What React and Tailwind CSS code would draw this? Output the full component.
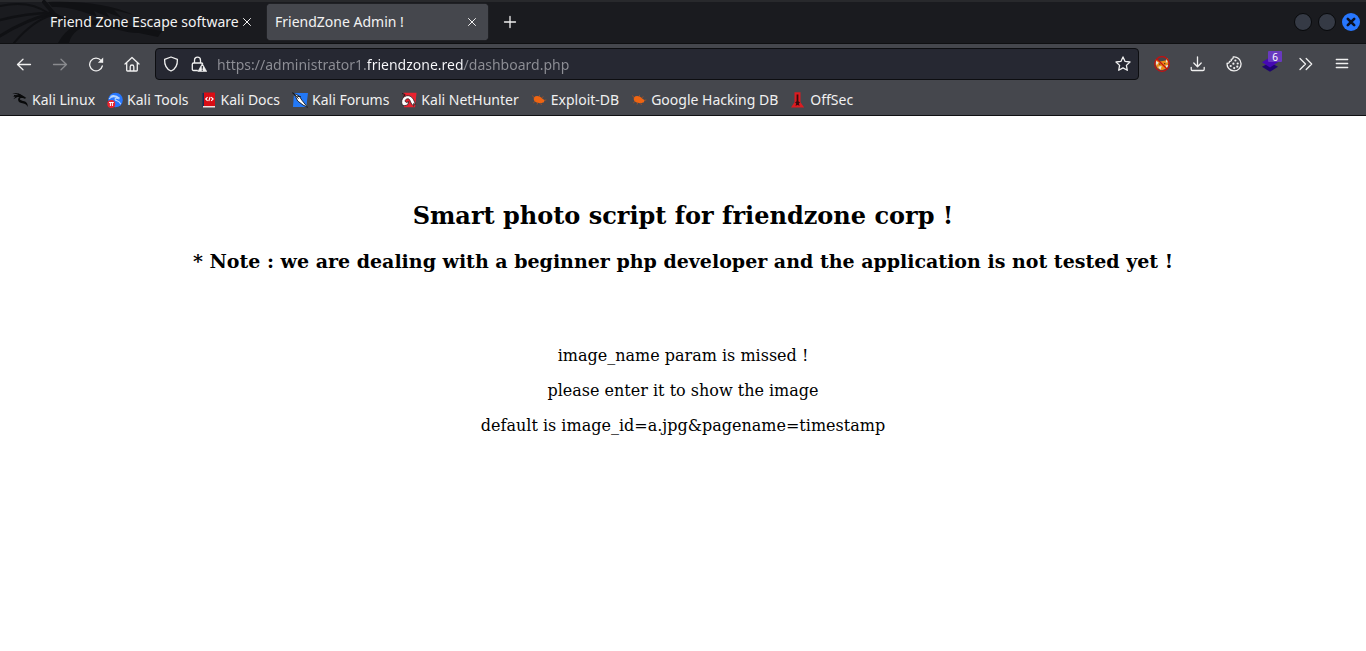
const stroke = {
  fill: 'none',
  stroke: 'currentColor',
  strokeWidth: 1.3,
  strokeLinecap: 'round',
  strokeLinejoin: 'round',
};

function Icon({ children, className = 'size-4' }) {
  return (
    <svg viewBox="0 0 16 16" className={`shrink-0 ${className}`} aria-hidden="true">
      {children}
    </svg>
  );
}

function ToolButton({ label, disabled, children }) {
  return (
    <button
      type="button"
      aria-label={label}
      disabled={disabled}
      className="relative flex h-9 w-9 shrink-0 items-center justify-center rounded text-[#f0f0f0] hover:bg-white/10 disabled:text-[#8a8b8f]"
    >
      {children}
    </button>
  );
}

const CloseGlyph = () => (
  <Icon>
    <path d="M4.5 4.5l7 7M11.5 4.5l-7 7" {...stroke} strokeWidth="1" />
  </Icon>
);

function Tab({ title, active }) {
  return (
    <div
      className={`flex h-9 w-[221px] shrink-0 items-center rounded pl-2 pr-2 text-[#f2f2f2] ${
        active ? 'bg-[#45474d] shadow-[0_0_1px_#606268]' : ''
      }`}
    >
      <button type="button" role="tab" aria-selected={!!active} className="min-w-0 flex-1 overflow-hidden whitespace-nowrap text-left">
        {title}
      </button>
      <button type="button" aria-label={`Close ${title}`} className="shrink-0">
        <CloseGlyph />
      </button>
    </div>
  );
}

function DragonBackdrop() {
  return (
    <svg viewBox="0 0 180 43" className="pointer-events-none absolute left-0 top-0 h-[43px] w-[180px]" aria-hidden="true">
      <g fill="none" stroke="#101114" strokeLinecap="round">
        <path d="M0 6C18 2 34 3 48 13" strokeWidth="2" />
        <path d="M0 20C16 16 32 13 50 13" strokeWidth="2.5" />
        <path d="M0 36C16 26 32 18 51 14" strokeWidth="3" />
        <path d="M14 43C24 31 36 20 52 15" strokeWidth="2" />
        <path d="M44 2L54 14C64 22 74 21 84 22" strokeWidth="4" />
      </g>
      <path d="M48 2C84 1 112 5 134 15L114 10L122 18L106 12L110 18L94 11L97 17C76 8 64 7 52 7Z" fill="#101114" />
      <path d="M58 43C66 28 80 20 98 20C118 20 126 27 143 28L162 31L158 37L139 33C122 33 112 26 96 25C80 26 72 32 69 43Z" fill="#101114" />
    </svg>
  );
}

const DragonIcon = () => (
  <Icon>
    <path d="M.3 1.2C4.5.4 8 1.4 10.4 3.6L14.4 5.8l-1.2-.1.3 1.4-2.6-1.1C8.6 5.6 7.4 6.4 8 7.5c.9 1.6 5.2 1 6.8 3.4.9 1.4 1 2.7.9 4.2-.8-2.2-1.8-3.1-4.2-3.6-2.8-.6-5.2-1.3-5.4-3.6-.1-1.3.5-2.1 1.4-2.6L5.4 5 1.4 7.2l2.2-2.8-3 .7 3.2-1.7L7 3.3C5 1.9 3 1.5.3 1.2Z" fill="#08090a" />
    <path d="M2 3.6L8 4M6 2l5 2.7" stroke="#08090a" strokeWidth="1.2" />
  </Icon>
);

const ToolsIcon = () => (
  <Icon>
    <circle cx="8.5" cy="8" r="7.3" fill="#2777ff" />
    <path d="M2 6.8C5 3.8 9 4 11 6.6c-2.3-.8-3.6.2-2.6 1.4 1.3 1.2 4 .7 5.4 4.2M3.4 4.4C7 2.6 10 4 12.8 6.3" fill="none" stroke="#b9d7ff" strokeWidth="1.1" />
    <circle cx="4.3" cy="12" r="4" fill="#e8232f" />
    <path d="M2 10.5h4.8M3.4 10.5V14M5.4 10.5V14" stroke="#fff" strokeWidth="1" />
  </Icon>
);

const DocsIcon = () => (
  <Icon>
    <path d="M1.5 1h2v14h-2z" fill="#152c53" />
    <path d="M3 .5h11V14H3z" fill="#d90d15" />
    <path d="M2 14h12v1.5H2z" fill="#f2dfe1" />
    <path d="M6.6 5.2L4.7 7l1.9 1.8M10.2 5.2L12.1 7l-1.9 1.8M9.1 4.8L7.8 9.2" fill="none" stroke="#fff" strokeWidth="1.1" />
  </Icon>
);

const ForumsIcon = () => (
  <Icon>
    <path d="M2 1h14l-1.7 14H1z" fill="#2378f5" />
    <path d="M.3.7L7.2 4l2.6 4.1 5.8 7.2-4.5-2.2L5.7 9 3.4 4.4z" fill="#fff" stroke="#15191e" strokeWidth=".9" />
    <path d="M1 1l5.5 5.7M5.3 4.4l3.5.2" stroke="#15191e" strokeWidth="1" />
  </Icon>
);

const NetHunterIcon = () => (
  <Icon>
    <path d="M2.5.8h13l-1.4 14.4H3z" fill="#e9222f" />
    <path d="M1.2 12.8C-1.1 6.8 4.3 2.2 9 4.1c3.3 1.3 4 5 5.6 8.2l-2.1-.7.3 2.6C9 11.7 9.6 7 7.2 6.8 4 6.6 3.1 10 5.7 10.4L8 9.6l-1.4 3.1c-2.2 1.3-4.3 1-5.4.1Z" fill="#fff" stroke="#24171b" strokeWidth=".8" />
    <path d="M1 1.5l3.3 1.1M2 4.5l2-1.4" stroke="#24171b" />
  </Icon>
);

const BugIcon = () => (
  <Icon>
    <path d="M2.8 5.4C5.5 3 9 4 11.8 7.1l1.6 1-.4 2.2-2.5.7c-3.4.6-7-.8-7.7-3.2Z" fill="#ef6512" />
    <path d="M3.8 6L1 3.4M4.5 9L2.2 11M7 10l-1 2.6M9.5 10.6l1 2.4M8 5l.7-2M10.5 6l2-1.4M13 8.5l2.3-.6" fill="none" stroke="#c4561a" strokeWidth=".6" />
  </Icon>
);

const OffSecIcon = () => (
  <Icon>
    <path d="M4.5.3h6v10l3.7 5.2H1l3.5-5.2z" fill="#dc1b20" />
    <path d="M6.6 2.5h1.8v6.8l1.6 1.3-1.2 1 .8 2.2-2-.9-2.1.9.7-2.2-1.1-1 1.5-1.3z" fill="#360b0e" />
  </Icon>
);

const bookmarks = [
  ['Kali Linux', DragonIcon],
  ['Kali Tools', ToolsIcon],
  ['Kali Docs', DocsIcon],
  ['Kali Forums', ForumsIcon],
  ['Kali NetHunter', NetHunterIcon],
  ['Exploit-DB', BugIcon],
  ['Google Hacking DB', BugIcon],
  ['OffSec', OffSecIcon],
];

function TabBar() {
  return (
    <header className="relative flex h-11 items-start border-b border-[#0f1012] bg-[#1a1b1f] pl-[42px] pr-1.5 pt-1 shadow-[inset_0_2px_0_#28292c]">
      <DragonBackdrop />
      <div role="tablist" className="relative flex gap-1">
        <Tab title="Friend Zone Escape software" />
        <Tab title="FriendZone Admin !" active />
      </div>
      <div className="ml-1 flex h-9 items-center">
        <ToolButton label="New tab">
          <Icon><path d="M8 2.5v11M2.5 8h11" {...stroke} /></Icon>
        </ToolButton>
      </div>
      <div className="ml-auto flex h-9 items-center gap-1.5">
        <button type="button" aria-label="Minimize" className="size-[18px] rounded-full border border-[#08090b] bg-[#353a45]" />
        <button type="button" aria-label="Maximize" className="size-[18px] rounded-full border border-[#08090b] bg-[#353a45]" />
        <button type="button" aria-label="Close window" className="flex size-[18px] items-center justify-center rounded-full bg-[#2777ff] text-[#0b1020]">
          <Icon><path d="M4.8 4.8l6.4 6.4M11.2 4.8l-6.4 6.4" {...stroke} strokeWidth="2.6" /></Icon>
        </button>
      </div>
    </header>
  );
}

function NavBar() {
  return (
    <nav className="flex h-10 items-center px-1.5" aria-label="Navigation">
      <ToolButton label="Back">
        <Icon><path d="M14.5 8.5h-13M7 3.2L1.5 8.5 7 13.8" {...stroke} /></Icon>
      </ToolButton>
      <ToolButton label="Forward" disabled>
        <Icon><path d="M1.5 8.5h13M9 3.2l5.5 5.3L9 13.8" {...stroke} /></Icon>
      </ToolButton>
      <ToolButton label="Reload">
        <Icon>
          <path d="M14.3 10A6.4 6.4 0 1 1 13 4.4l1.3 1.3" {...stroke} />
          <path d="M15.2 1.4v5.3H9.9z" fill="currentColor" />
        </Icon>
      </ToolButton>
      <ToolButton label="Home">
        <Icon>
          <path d="M1 8l7-6.5L15 8M2.7 6.8v7.4c0 .5.3.8.8.8h9c.5 0 .8-.3.8-.8V6.8M6.2 15v-4.2c0-1 .7-1.8 1.8-1.8s1.8.8 1.8 1.8V15" {...stroke} />
        </Icon>
      </ToolButton>
      <div className="ml-[5px] mr-[5px] flex h-8 min-w-0 flex-1 items-center rounded border border-[#0d0e11] bg-[#262832] px-[7px] text-[#f0f0f0]">
        <Icon>
          <path d="M8 1l6.4 2.4C14.6 9 12.5 13 8 15 3.5 13 1.4 9 1.6 3.4z" {...stroke} />
        </Icon>
        <Icon className="ml-3 size-4">
          <path d="M6.3 14.5H2.6c-.8 0-1.3-.5-1.3-1.3V8.3c0-.8.5-1.3 1.3-1.3h7.8c.6 0 1 .2 1.2.7M3.5 7V4.2a3 3 0 0 1 6 0V7" {...stroke} />
          <path d="M11.3 7.6l4.5 8H6.8z" fill="currentColor" stroke="currentColor" strokeWidth=".6" strokeLinejoin="round" />
          <path d="M11.3 10v2.8M11.3 13.6v1.2" stroke="#262832" strokeWidth="1.2" />
        </Icon>
        <input
          type="text"
          aria-label="Address"
          defaultValue="https://administrator1.friendzone.red/dashboard.php"
          className="ml-2.5 h-full min-w-0 flex-1 bg-[linear-gradient(90deg,#8e8f96_150px,#fbfbfe_150px,#fbfbfe_247px,#8e8f96_247px)] bg-clip-text text-transparent outline-none"
        />
        <button type="button" aria-label="Bookmark this page">
          <Icon>
            <path d="M8 .9l2.1 4.5 4.9.6-3.6 3.4.9 4.9L8 11.9l-4.3 2.4.9-4.9L1 6l4.9-.6z" {...stroke} />
          </Icon>
        </button>
      </div>
      <ToolButton label="Proxy off">
        <Icon>
          <path d="M1.6 3.5L6 5.6l5.4-1 2.5-2.7.7 5.2-2.2 5.4-4.5 1.8-4.5-2.1-2-4z" fill="#eb8b17" />
          <path d="M1.2 4.6l3.4 2-1.9 2.9zM12.5 3.2l1.2 3-2 .3zM4 10.7l3.7-.6L6.4 14zM11.4 9.6l3-.6-1.6 3.4z" fill="#e4e4e1" />
          <path d="M5.1 8.2h1.3M10 7.6h1.3" stroke="#53391d" strokeWidth="1.2" />
          <circle cx="8" cy="8" r="7.3" fill="none" stroke="#c70f0f" strokeWidth="1.2" />
          <path d="M3 3l10 10" stroke="#c70f0f" strokeWidth="1.2" />
        </Icon>
      </ToolButton>
      <ToolButton label="Downloads">
        <Icon><path d="M7.5.8v9.8M3.8 7l3.7 3.8L11.2 7M1.2 11.3v2c0 .8.5 1.2 1.2 1.2h10.6c.7 0 1.2-.4 1.2-1.2v-2" {...stroke} /></Icon>
      </ToolButton>
      <ToolButton label="Cookies">
        <Icon>
          <path d="M7.2 1A7 7 0 1 1 1.1 7.2c1.4.4 2.4-.3 2.3-1.7 1.6.1 2.3-.8 1.8-2.2C6.6 3.3 7.3 2.3 7.2 1Z" {...stroke} />
          <g fill="currentColor">
            <circle cx="9.4" cy="4.5" r="1.1" />
            <circle cx="7.4" cy="7.7" r="1.1" />
            <circle cx="11.7" cy="7.5" r="1.1" />
            <circle cx="4.7" cy="10" r="1.1" />
            <circle cx="8.2" cy="12.1" r="1.1" />
            <circle cx="11.3" cy="10.7" r="1.1" />
          </g>
        </Icon>
      </ToolButton>
      <ToolButton label="Wappalyzer, 6 technologies">
        <Icon>
          <path d="M0 10.8l8-4.4 8 4.4-8 4.9z" fill="#1f0470" />
          <path d="M0 6.2l8-5 8 5-8 5.3z" fill="#4608b4" />
        </Icon>
        <span className="absolute right-[6px] top-[5px] flex h-[11px] w-3.5 items-center justify-center rounded-[1px] bg-[#6939bf] text-[10px] leading-none text-white">
          6
        </span>
      </ToolButton>
      <ToolButton label="More tools">
        <Icon><path d="M2 2.5L7.5 8 2 13.5M8.2 2.5L13.7 8l-5.5 5.5" {...stroke} /></Icon>
      </ToolButton>
      <ToolButton label="Open application menu">
        <Icon><path d="M2.3 3.5h11.4M2.3 7.5h11.4M2.3 11.5h11.4" {...stroke} /></Icon>
      </ToolButton>
    </nav>
  );
}

export default function App() {
  return (
    <div className="min-h-screen bg-white font-['Noto_Sans',sans-serif] text-[14px] leading-5">
      <TabBar />
      <div className="border-b border-[#0f1012] bg-[#45474d]">
        <NavBar />
        <ul className="flex h-[31px] items-center gap-3 px-3 text-[#f0f0f0]">
          {bookmarks.map(([name, Glyph]) => (
            <li key={name}>
              <a href="#" className="flex items-center gap-1 whitespace-nowrap">
                <Glyph />
                {name}
              </a>
            </li>
          ))}
        </ul>
      </div>
      <main className="px-2 pt-[86px] text-center font-['DejaVu_Serif',serif] text-[16px] leading-[19px] text-black">
        <h2 className="text-[24px] font-bold leading-7">Smart photo script for friendzone corp !</h2>
        <h3 className="mt-5 text-[19px] font-bold leading-[22px]">
          * Note : we are dealing with a beginner php developer and the application is not tested yet !
        </h3>
        <div className="mt-[74px] flex flex-col gap-4">
          <p>image_name param is missed !</p>
          <p>please enter it to show the image</p>
          <p>default is image_id=a.jpg&amp;pagename=timestamp</p>
        </div>
      </main>
    </div>
  );
}
